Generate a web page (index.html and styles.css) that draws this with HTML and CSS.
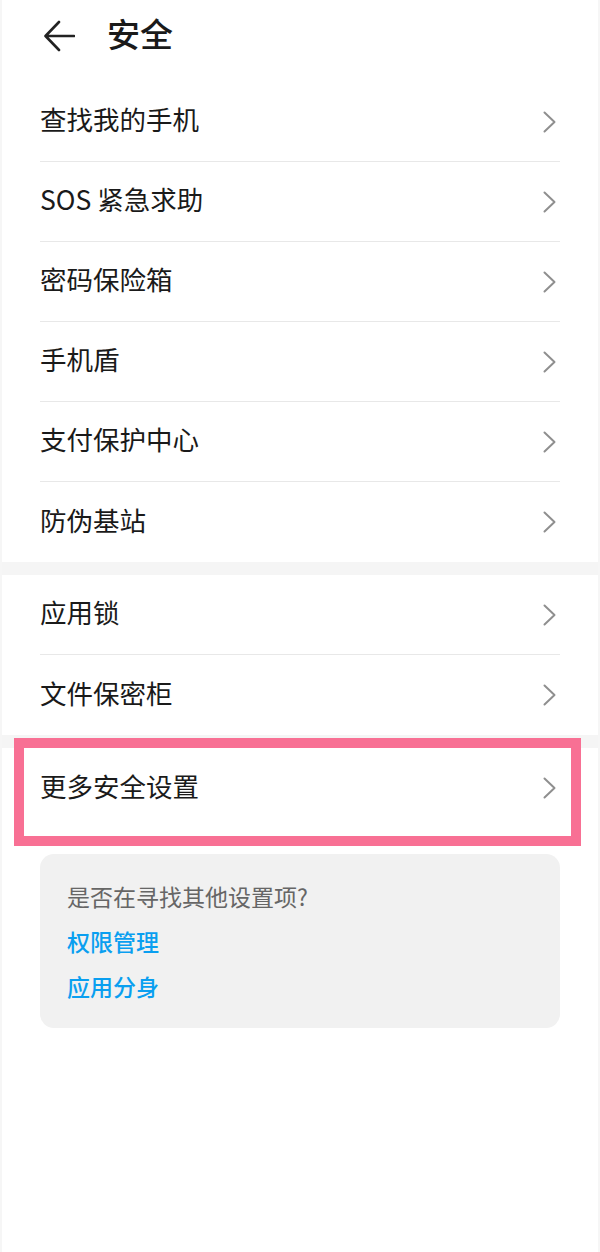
FILE: index.html
```html
<!DOCTYPE html>
<html lang="zh-CN">
<head>
<meta charset="utf-8">
<title>安全</title>
<link rel="stylesheet" href="styles.css">
</head>
<body>
<div class="page">
  <header class="header">
    <svg class="back" width="32" height="32" viewBox="0 0 32 32" aria-hidden="true">
      <path d="M3 16 H31 M16 2 L2.5 16 L16 30" fill="none" stroke="#222" stroke-width="2.6" stroke-linecap="round" stroke-linejoin="round"/>
    </svg>
    <h1 class="title">安全</h1>
  </header>

  <section class="group">
    <div class="row"><span class="label">查找我的手机</span><svg class="chev" width="16" height="22" viewBox="0 0 16 22"><polyline points="1.5,1.5 11.5,11 1.5,20.5" fill="none" stroke="#8f8f8f" stroke-width="2" stroke-linejoin="round" stroke-linecap="round"/></svg></div>
    <div class="row"><span class="label">SOS 紧急求助</span><svg class="chev" width="16" height="22" viewBox="0 0 16 22"><polyline points="1.5,1.5 11.5,11 1.5,20.5" fill="none" stroke="#8f8f8f" stroke-width="2" stroke-linejoin="round" stroke-linecap="round"/></svg></div>
    <div class="row"><span class="label">密码保险箱</span><svg class="chev" width="16" height="22" viewBox="0 0 16 22"><polyline points="1.5,1.5 11.5,11 1.5,20.5" fill="none" stroke="#8f8f8f" stroke-width="2" stroke-linejoin="round" stroke-linecap="round"/></svg></div>
    <div class="row"><span class="label">手机盾</span><svg class="chev" width="16" height="22" viewBox="0 0 16 22"><polyline points="1.5,1.5 11.5,11 1.5,20.5" fill="none" stroke="#8f8f8f" stroke-width="2" stroke-linejoin="round" stroke-linecap="round"/></svg></div>
    <div class="row"><span class="label">支付保护中心</span><svg class="chev" width="16" height="22" viewBox="0 0 16 22"><polyline points="1.5,1.5 11.5,11 1.5,20.5" fill="none" stroke="#8f8f8f" stroke-width="2" stroke-linejoin="round" stroke-linecap="round"/></svg></div>
    <div class="row"><span class="label">防伪基站</span><svg class="chev" width="16" height="22" viewBox="0 0 16 22"><polyline points="1.5,1.5 11.5,11 1.5,20.5" fill="none" stroke="#8f8f8f" stroke-width="2" stroke-linejoin="round" stroke-linecap="round"/></svg></div>
  </section>
  <div class="band"></div>

  <section class="group">
    <div class="row"><span class="label">应用锁</span><svg class="chev" width="16" height="22" viewBox="0 0 16 22"><polyline points="1.5,1.5 11.5,11 1.5,20.5" fill="none" stroke="#8f8f8f" stroke-width="2" stroke-linejoin="round" stroke-linecap="round"/></svg></div>
    <div class="row"><span class="label">文件保密柜</span><svg class="chev" width="16" height="22" viewBox="0 0 16 22"><polyline points="1.5,1.5 11.5,11 1.5,20.5" fill="none" stroke="#8f8f8f" stroke-width="2" stroke-linejoin="round" stroke-linecap="round"/></svg></div>
  </section>
  <div class="band"></div>

  <section class="group highlight-wrap">
    <div class="row"><span class="label">更多安全设置</span><svg class="chev" width="16" height="22" viewBox="0 0 16 22"><polyline points="1.5,1.5 11.5,11 1.5,20.5" fill="none" stroke="#8f8f8f" stroke-width="2" stroke-linejoin="round" stroke-linecap="round"/></svg></div>
    <div class="highlight"></div>
  </section>

  <div class="card">
    <p class="question">是否在寻找其他设置项?</p>
    <a class="link">权限管理</a>
    <a class="link">应用分身</a>
  </div>
</div>
</body>
</html>
```

FILE: styles.css
```css
* { box-sizing: border-box; }

html, body {
  margin: 0;
  padding: 0;
  background: #ffffff;
}

body {
  font-family: "Noto Sans CJK SC", "Noto Sans", sans-serif;
  color: #1a1a1a;
}

.page {
  width: 600px;
  min-height: 1252px;
  border-left: 2px solid #f6f6f6;
  border-right: 2px solid #f6f6f6;
}

.header {
  height: 82px;
  display: flex;
  align-items: center;
  padding-left: 41px;
  padding-bottom: 12px;
}

.back {
  display: block;
  margin-right: 32px;
  margin-top: 2px;
}

.title {
  margin: 0 0 4px 0;
  font-size: 33px;
  font-weight: 500;
  line-height: 1;
  color: #1a1a1a;
}

.group {
  padding: 0 38px 0 38px;
}

.row {
  height: 80px;
  display: flex;
  align-items: center;
  justify-content: space-between;
  border-bottom: 1px solid #e8e8e8;
}

.row:last-child,
.highlight-wrap .row {
  border-bottom: none;
}

.label {
  font-size: 26.5px;
  line-height: 1;
  color: #1a1a1a;
  margin-bottom: 4px;
}

.chev {
  display: block;
  margin-right: 1px;
}

.band {
  height: 13px;
  background: #f5f5f5;
}

.highlight-wrap {
  position: relative;
}

.highlight {
  position: absolute;
  top: -10px;
  left: 12px;
  width: 567px;
  height: 108px;
  border: 10px solid #f87094;
  pointer-events: none;
}

.card {
  margin: 26px 38px 0 38px;
  height: 174px;
  padding: 20px 27px 0 27px;
  background: #f1f1f1;
  border-radius: 14px;
}

.question {
  margin: 0;
  font-size: 23px;
  line-height: 45px;
  color: #666666;
}

.link {
  display: block;
  font-size: 23px;
  font-weight: 500;
  line-height: 45px;
  color: #0a9ff0;
  text-decoration: none;
}
```
